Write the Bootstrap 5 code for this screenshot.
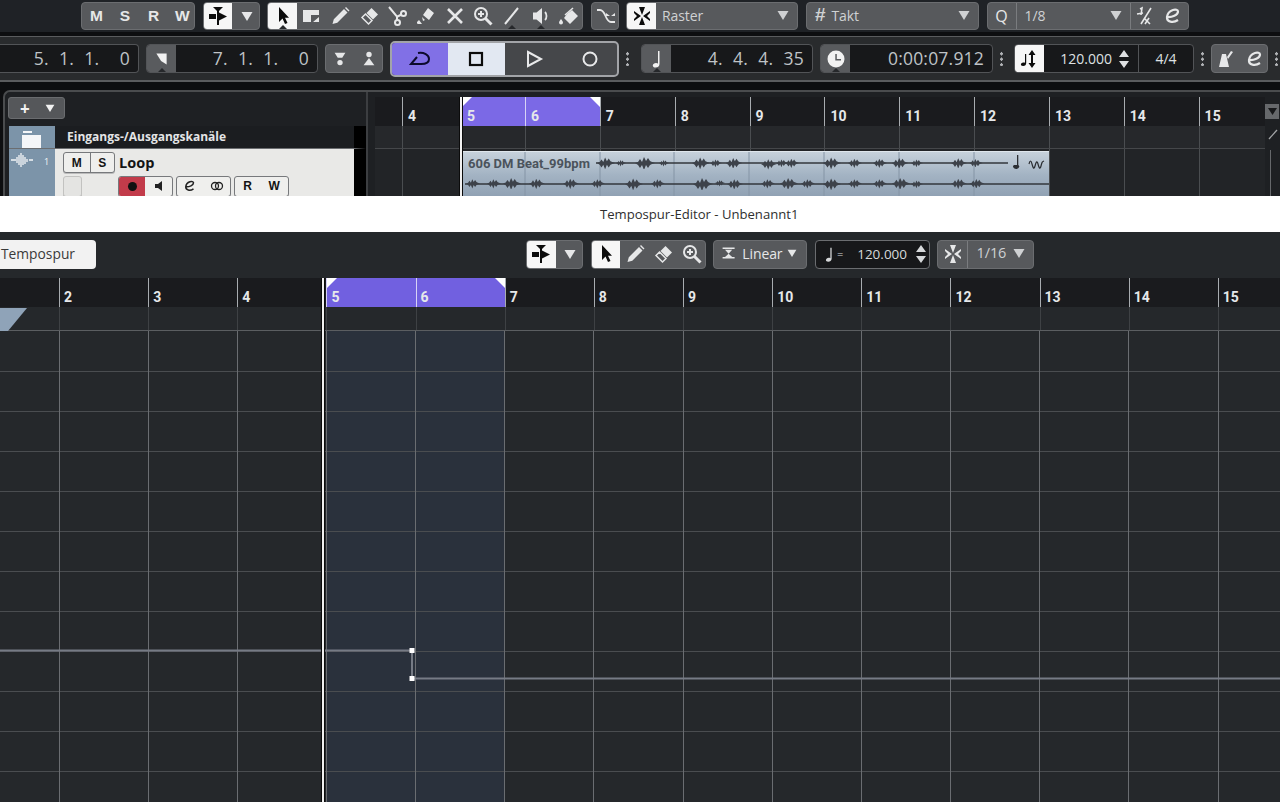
<!doctype html>
<html lang="de"><head><meta charset="utf-8"><title>Tempospur-Editor</title>
<link href="https://cdn.jsdelivr.net/npm/bootstrap@5.3.0/dist/css/bootstrap.min.css" rel="stylesheet">
<style>
html,body{height:802px;overflow:hidden}
body{background:#0d0e10;font-family:"Open Sans","Liberation Sans",sans-serif;color:#c9ccd0;font-size:13px}
.cb-i{width:20px;height:20px;fill:currentColor;stroke:none;display:block;flex:none}
.cb-tb{height:32px;background:#1f2226;padding-left:81px;gap:7.6px}
.cb-g{height:28px;background:#57595c;border:1px solid #6b6d70;border-radius:4px;margin-top:2px;overflow:hidden;color:#e6e7e8;flex:none}
.cb-c{width:28.7px;height:100%;flex:none}
.cb-on{background:#f6f6f6;color:#0c0c0c}
.cb-sep{border-left:1px solid #7a7c7f}
.cb-l{font-size:14px;color:#cfd1d3;letter-spacing:-.1px;padding-bottom:2px}
.cb-bold{font-weight:700;font-size:15.500px;font-family:"Liberation Sans",sans-serif}
.cb-gap{height:4px;background:#0d0e10}
.cb-tr{height:46px;background:#292b2d;border-top:1px solid #5a5c5e;border-bottom:2px solid #5a5c5e;gap:7px}
.cb-box{height:29px;background:#17181a;border:1px solid #525457;border-radius:4px;overflow:hidden;flex:none;font-size:17.5px;color:#bfc3c7}
.cb-ic{width:29px;height:100%;background:#595b5e;color:#f2f2f2;flex:none}
.cb-ic.cb-on{background:#f6f6f6;color:#0c0c0c}
.cb-ntc{position:relative}
.cb-ntc::after{content:"";position:absolute;left:50%;bottom:0;margin-left:-4px;border:4px solid transparent;border-top:0;border-bottom-color:#26282b}
.cb-val{flex:1;text-align:right;padding-right:8px;white-space:pre;letter-spacing:.2px;word-spacing:5.5px}
.cb-plain{word-spacing:0}
.cb-loop{height:36px;width:229px;border:2px solid #a2a4a8;border-radius:5px;overflow:hidden;background:#45474a;margin-left:0;flex:none}
.cb-dots{width:3px;height:15px;flex:none;background:radial-gradient(circle,#b0b2b5 1.4px,transparent 1.6px) 0 0/3px 5.5px}
.cb-panel{height:106px;margin:8px 0 0 3px;border-top:2px solid #4a4c4e;border-left:2px solid #4a4c4e;border-top-left-radius:7px;background:#1e2023;overflow:hidden}
.cb-left{width:363px;flex:none;border-right:2px solid #3c3e41}
.cb-add{width:57px;height:22px;margin:5px 0 7px 3px;padding-left:5px;background:#55575a;border:1px solid #6a6c6f;border-radius:3px;color:#f2f2f2}
.cb-trk{margin-left:4px;width:357px;border-right:12px solid #000}
.cb-tc{width:46px;background:#7c94a9;flex:none;color:#f4f6f8}
.cb-fold{height:23px;background:#1b1d20;border-bottom:1px solid #6b6d70;color:#e4e5e6;font-weight:700;font-size:12px}
.cb-loopt{height:50px;background:#e9e9e7;margin-top:0}
.cb-mini{height:21px;border:1px solid #77797c;border-radius:3px;background:#efefed;color:#141414;font:700 12px "Liberation Sans",sans-serif;overflow:hidden;box-shadow:0 1px 0 #bbb}
.cb-mc{height:100%;flex:none}
.cb-right{flex:1;min-width:0;padding-left:7px}
.cb-rul{height:29px;background:#1a1b1e;margin-top:5px;font:700 14px "Roboto","Liberation Sans",sans-serif;color:#e6e8ea}
.cb-lane{height:23px;background:#26282b;border-bottom:1px solid #45474a}
.cb-rest{height:47px;background:#222427;position:relative}
.cb-b{flex:none;border-left:1px solid #a8acb0;padding:11px 0 0 5px;height:100%;width:74.85px}
.cb-lane .cb-b,.cb-rest .cb-b{border-left-color:#4a4d50}
.cb-w0{width:27px;border:0}.cb-w1{width:59px}.cb-w2{width:64px}.cb-w3{width:66px}
.cb-pur{background:#7b69e6;position:relative;border-left-color:#d7d3f5}
.cb-c1,.cb-c2{position:absolute;top:0;width:0;height:0;border-top:10px solid #fff}
.cb-c1{left:0;border-right:10px solid transparent}.cb-c2{right:0;border-left:10px solid transparent}
.cb-ph{position:absolute;width:2px;background:#f1f1f1;box-shadow:-1px 0 0 #0b0b0b,1px 0 0 #0b0b0b}
.cb-evt{position:absolute;left:88px;top:2px;width:586px;height:47px;background:linear-gradient(#c6d1db,#a3b3c3 50%,#8fa0b2);border-top:1px solid #dfe6ec}
.cb-side{width:15px;flex:none;background:#1e2023;color:#a4a6a8;padding-top:12px}
.cb-sb{width:14px;height:15px;background:#66686b;color:#17181a}
.cb-vl{width:1px;height:46px;background:#66686b;margin:9px 0 0 5px}
.cb-title{height:36px;background:#fff;color:#2e2e2e;font-size:13.100px;padding-left:600px;line-height:36px}
.cb-ebar{height:46px;background:#25282b;gap:7.6px;padding-bottom:2px}
.cb-spur{width:96px;height:29px;background:#f2f2f2;border-radius:0 4px 4px 0;color:#3a3a3a;padding-left:1px;line-height:27px;font-size:13.800px;margin-right:422.5px;flex:none}
.cb-eg{height:29px;background:#57595c;border:1px solid #6b6d70;border-radius:4px;overflow:hidden;color:#e6e7e8;flex:none}
.cb-ed{position:relative;height:524px;background:#25282b}
.cb-erul{height:29px;background:#1a1b1e;font:700 14px "Roboto","Liberation Sans",sans-serif;color:#e6e8ea}
.cb-elane{height:24px;background:#25282b;border-bottom:1px solid #5b5e61}
.cb-e{flex:none;width:89.15px;height:100%;border-left:1px solid #a8acb0;padding:11px 0 0 4px}
.cb-elane .cb-e{border-left-color:#3e4144}
.cb-e0{width:59px;border:0;flex:none}
.cb-epur{background:#7160e0;position:relative;border-left-color:#d7d3f5}
.cb-plot{display:block;width:1280px;height:471px}
.cb-tri{position:absolute;left:0;top:30px;width:27px;height:23px}
.cb-s18{width:18px;height:18px}
</style></head>
<body class="m-0">
<svg width="0" height="0" class="position-absolute"><defs>
<symbol id="snapt" viewBox="0 0 20 20"><path d="M5 1h10l-4 4v14H9V5zM1 8h7v5H1zM11 6.500l8 4-8 4z"/></symbol>
<symbol id="arrow" viewBox="0 0 20 20"><path d="M6 1v15l3.500-3.500 2.500 5.500 2.500-1-2.500-5.200H16z"/></symbol>
<symbol id="range" viewBox="0 0 20 20"><path d="M2 4h16v5h-8v7H2zM18 11v5h-6z"/></symbol>
<symbol id="pencil" viewBox="0 0 20 20"><path d="M2.500 18l1.300-4.800L14 3l3.500 3.500L7.300 16.700zM15 2l1-1 3.500 3.500-1 1z"/></symbol>
<symbol id="eraser" viewBox="0 0 20 20"><path d="M12.500 2L19 8.500l-5 5L7.500 7z"/><path d="M6.500 8l6.500 6.500-3.500 3.500-6.500-6.500z" fill="none" stroke="currentColor" stroke-width="1.500"/></symbol>
<symbol id="sciss" viewBox="0 0 20 20"><g fill="none" stroke="currentColor" stroke-width="2"><path d="M2 1l8 9.500v4M10.500 10.500l4-2"/><circle cx="10.500" cy="16.500" r="2.500"/><circle cx="16.500" cy="7.500" r="2.500"/></g></symbol>
<symbol id="glue" viewBox="0 0 20 20"><path d="M12 2l6 5-5 7-6-5zM6 11l3 3-2 1zM3 14l3 4H2c-1 0-1-1-1-2z"/></symbol>
<symbol id="xx" viewBox="0 0 20 20"><path d="M3 3l14 14M17 3L3 17" stroke="currentColor" stroke-width="2.600" fill="none"/></symbol>
<symbol id="zoom" viewBox="0 0 20 20"><g fill="none" stroke="currentColor"><circle cx="8" cy="8" r="6" stroke-width="2"/><path d="M5 8h6M8 5v6" stroke-width="2"/><path d="M12.500 12.500l6 6" stroke-width="3"/></g></symbol>
<symbol id="line" viewBox="0 0 20 20"><path d="M3 18L16 2" stroke="currentColor" stroke-width="2" fill="none"/></symbol>
<symbol id="spk" viewBox="0 0 20 20"><path d="M2 6.500h3.500L11 2v16l-5.500-4.500H2z"/><path d="M14 6c2 2 2 6 0 8" stroke="currentColor" stroke-width="1.800" fill="none"/></symbol>
<symbol id="paint" viewBox="0 0 20 20"><path d="M8 8l5-4 6 6-8 8-6-6zM2 13c1 1.500 2 2.500 2 3.500a2 2 0 0 1-4 0c0-1 1-2 2-3.500z"/><path d="M6 9l8-7" stroke="currentColor" stroke-width="1.500"/></symbol>
<symbol id="warp" viewBox="0 0 20 20"><path d="M1 4h3c6 0 5 12 11 12h4" fill="none" stroke="currentColor" stroke-width="1.800"/><path d="M10 7l4 3-4 0zM19 7l-4 3 4 0z"/></symbol>
<symbol id="cross" viewBox="0 0 20 20"><path d="M10 9L7 1h6zM10 11l3 8H7zM9 10L2 5v2l3 3-3 3v2zM11 10l7-5v2l-3 3 3 3v2z"/></symbol>
<symbol id="dn" viewBox="0 0 20 20"><path d="M4.500 6h11L10 15z"/></symbol>
<symbol id="qq" viewBox="0 0 20 20"><path d="M2 8l6-1M5 3l2-1-1 7M16 2L6 18M10 18l4-6M10 13l5 5" stroke="currentColor" stroke-width="1.600" fill="none"/></symbol>
<symbol id="ee" viewBox="0 0 20 20"><path d="M4 11c5 .5 11-2 11-5.500C15 2 5 3 4 11c-.5 5 6 6.500 11 3" stroke="currentColor" stroke-width="2.200" fill="none"/></symbol>
<symbol id="fl1" viewBox="0 0 20 20"><path d="M4 3h12l-3.500 5.500h-5zM10 11a3 3 0 1 1 0 6 3 3 0 0 1 0-6z"/></symbol>
<symbol id="fl2" viewBox="0 0 20 20"><circle cx="10" cy="5" r="3"/><path d="M10 9l6 8H4z"/></symbol>
<symbol id="fl3" viewBox="0 0 20 20"><path d="M4 4h12v13L9.500 13z"/></symbol>
<symbol id="loop" viewBox="0 0 24 20"><path d="M10 4c6-1 11 2 11 6 0 4-4 5-8 5H3l6-7" fill="none" stroke="currentColor" stroke-width="2"/></symbol>
<symbol id="stop" viewBox="0 0 20 20"><rect x="4" y="4" width="12" height="12" fill="none" stroke="currentColor" stroke-width="2.200"/></symbol>
<symbol id="play" viewBox="0 0 20 20"><path d="M4 3l13 7-13 7z" fill="none" stroke="currentColor" stroke-width="2"/></symbol>
<symbol id="rec" viewBox="0 0 20 20"><circle cx="10" cy="10" r="6.500" fill="none" stroke="currentColor" stroke-width="2"/></symbol>
<symbol id="note" viewBox="0 0 20 20"><path d="M11 2h1.500v13c0 2.500-2 3.500-4 3.500-2.500 0-3.500-2-2-3.500 1.300-1.300 3.400-1.300 4.500-.5z"/></symbol>
<symbol id="clock" viewBox="0 0 20 20"><path fill-rule="evenodd" d="M10 1.500a8.500 8.500 0 1 1 0 17 8.500 8.500 0 0 1 0-17zM9.300 5v6.500H15V10h-4.200V5z"/></symbol>
<symbol id="tmp" viewBox="0 0 20 20"><path d="M5 5h1.200v9c0 2-1.200 3-3 3-2 0-3-1.500-1.800-2.800 1-1 2.500-1 3.600-.4zM12 1l3.500 5H13v8h2.500L12 19l-3.500-5H11V6H8.500z"/></symbol>
<symbol id="updn" viewBox="0 0 12 20"><path d="M6 1l5 7H1zM6 19l-5-7h10z"/></symbol>
<symbol id="metro" viewBox="0 0 20 20"><path d="M6 5h4l3 13H3zM15 2l2 1-5 7-1-2z"/></symbol>
<symbol id="lin" viewBox="0 0 20 20"><path d="M2 3h15v2H2zM5 6h9l-4.500 5zM9.500 11L5 15h9zM2 15h15v2H2z"/></symbol>
<symbol id="blob" viewBox="0 0 20 12"><path d="M0 6l3-1 2-3 2 3 2-5 2 4 2-3 2 3 2 1 3 1-3 1-2 1-2 3-2-3-2 5-2-5-2 3-2-3z"/></symbol>
</defs></svg>

<div class="cb-tb d-flex">
  <div class="cb-g d-flex align-items-center" style="width:114px"><div class="cb-c d-flex align-items-center justify-content-center cb-bold">M</div><div class="cb-c d-flex align-items-center justify-content-center cb-bold">S</div><div class="cb-c d-flex align-items-center justify-content-center cb-bold">R</div><div class="cb-c d-flex align-items-center justify-content-center cb-bold">W</div></div>
  <div class="cb-g d-flex" style="width:57px"><div class="cb-c cb-on d-flex align-items-center justify-content-center"><svg class="cb-i"><use href="#snapt"/></svg></div><div class="cb-c d-flex align-items-center justify-content-center"><svg class="cb-i"><use href="#dn"/></svg></div></div>
  <div class="cb-g d-flex position-relative" style="width:316px">
    <div class="cb-c cb-on cb-ntc d-flex align-items-center justify-content-center"><svg class="cb-i"><use href="#arrow"/></svg></div>
    <div class="cb-c d-flex align-items-center justify-content-center"><svg class="cb-i"><use href="#range"/></svg></div>
    <div class="cb-c d-flex align-items-center justify-content-center"><svg class="cb-i"><use href="#pencil"/></svg></div>
    <div class="cb-c d-flex align-items-center justify-content-center"><svg class="cb-i"><use href="#eraser"/></svg></div>
    <div class="cb-c d-flex align-items-center justify-content-center"><svg class="cb-i"><use href="#sciss"/></svg></div>
    <div class="cb-c d-flex align-items-center justify-content-center"><svg class="cb-i"><use href="#glue"/></svg></div>
    <div class="cb-c d-flex align-items-center justify-content-center"><svg class="cb-i"><use href="#xx"/></svg></div>
    <div class="cb-c d-flex align-items-center justify-content-center"><svg class="cb-i"><use href="#zoom"/></svg></div>
    <div class="cb-c cb-ntc d-flex align-items-center justify-content-center"><svg class="cb-i"><use href="#line"/></svg></div>
    <div class="cb-c cb-ntc d-flex align-items-center justify-content-center"><svg class="cb-i"><use href="#spk"/></svg></div>
    <div class="cb-c d-flex align-items-center justify-content-center"><svg class="cb-i"><use href="#paint"/></svg></div>
  </div>
  <div class="cb-g d-flex" style="width:28px"><div class="cb-c d-flex align-items-center justify-content-center"><svg class="cb-i"><use href="#warp"/></svg></div></div>
  <div class="cb-g d-flex" style="width:172px"><div class="cb-c cb-on d-flex align-items-center justify-content-center"><svg class="cb-i"><use href="#cross"/></svg></div><div class="flex-grow-1 d-flex align-items-center justify-content-between cb-l pe-1" style="padding-left:6px">Raster<svg class="cb-i"><use href="#dn"/></svg></div></div>
  <div class="cb-g d-flex" style="width:173px"><div class="flex-grow-1 d-flex align-items-center cb-l ps-2 pe-1"><span class="cb-bold" style="font-size:19px;margin-right:6px">#</span>Takt<svg class="cb-i ms-auto"><use href="#dn"/></svg></div></div>
  <div class="cb-g d-flex" style="width:202px"><div class="d-flex align-items-center justify-content-center" style="width:28px;font-size:16px">Q</div><div class="cb-sep d-flex align-items-center justify-content-between cb-l ps-2 pe-1" style="width:114px">1/8<svg class="cb-i"><use href="#dn"/></svg></div><div class="cb-sep d-flex align-items-center justify-content-around flex-grow-1"><svg class="cb-i"><use href="#qq"/></svg><svg class="cb-i"><use href="#ee"/></svg></div></div>
</div>
<div class="cb-gap"></div>
<div class="cb-tr d-flex align-items-center">
  <div class="cb-box d-flex align-items-center" style="width:139px;border-left:0;border-radius:0 4px 4px 0"><div class="cb-val">5. 1. 1.  0</div></div>
  <div class="cb-box d-flex align-items-center" style="width:172px"><div class="cb-ic cb-ntc d-flex align-items-center justify-content-center"><svg class="cb-i" style="width:17px;height:17px"><use href="#fl3"/></svg></div><div class="cb-val">7. 1. 1.  0</div></div>
  <div class="cb-g d-flex m-0" style="width:58px;height:29px"><div class="cb-c d-flex align-items-center justify-content-center"><svg class="cb-i cb-s18"><use href="#fl1"/></svg></div><div class="cb-c d-flex align-items-center justify-content-center"><svg class="cb-i cb-s18"><use href="#fl2"/></svg></div></div>
  <div class="cb-loop d-flex">
    <div class="d-flex align-items-center justify-content-center" style="width:56px;background:#8170e6;color:#0c0a2c"><svg class="cb-i" style="width:24px"><use href="#loop"/></svg></div>
    <div class="d-flex align-items-center justify-content-center" style="width:58px;background:#e2e8f2;color:#0c0c0c"><svg class="cb-i"><use href="#stop"/></svg></div>
    <div class="d-flex align-items-center justify-content-center" style="width:58px;color:#e8e9ea"><svg class="cb-i"><use href="#play"/></svg></div>
    <div class="d-flex align-items-center justify-content-center" style="width:55px;color:#e8e9ea"><svg class="cb-i"><use href="#rec"/></svg></div>
  </div>
  <div class="cb-dots"></div>
  <div class="cb-box d-flex align-items-center" style="width:172px;margin-left:5px"><div class="cb-ic cb-ntc d-flex align-items-center justify-content-center"><svg class="cb-i"><use href="#note"/></svg></div><div class="cb-val">4. 4. 4. 35</div></div>
  <div class="cb-box d-flex align-items-center" style="width:173px"><div class="cb-ic cb-ntc d-flex align-items-center justify-content-center"><svg class="cb-i"><use href="#clock"/></svg></div><div class="cb-val cb-plain">0:00:07.912</div></div>
  <div class="cb-dots"></div>
  <div class="cb-box d-flex align-items-center" style="width:180px;margin-left:4px;font-size:14px;color:#dfe1e3"><div class="cb-ic cb-on d-flex align-items-center justify-content-center"><svg class="cb-i"><use href="#tmp"/></svg></div><div class="d-flex align-items-center justify-content-end pe-2" style="width:94px;gap:6px">120.000<svg width="12" height="20" fill="currentColor"><use href="#updn"/></svg></div><div class="cb-sep d-flex align-items-center justify-content-center h-100 flex-grow-1" style="border-color:#525457">4/4</div></div>
  <div class="cb-dots"></div>
  <div class="cb-g d-flex m-0" style="width:57px;height:29px"><div class="cb-c d-flex align-items-center justify-content-center"><svg class="cb-i"><use href="#metro"/></svg></div><div class="cb-c d-flex align-items-center justify-content-center"><svg class="cb-i"><use href="#ee"/></svg></div></div>
  <div class="cb-dots"></div>
</div>

<div class="cb-panel d-flex">
  <div class="cb-left">
    <div class="cb-add d-flex align-items-center justify-content-around"><b style="font-size:17px;line-height:1">+</b><svg class="cb-i" style="width:16px;height:16px"><use href="#dn"/></svg></div>
    <div class="cb-trk cb-fold d-flex"><div class="cb-tc d-flex justify-content-center pt-1"><svg width="22" height="18" fill="#f5f6f8"><path d="M2 1h9v2H2zM1 5h19v13H1z"/></svg></div><div class="d-flex align-items-center" style="padding-left:12px">Eingangs-/Ausgangskanäle</div></div>
    <div class="cb-trk cb-loopt d-flex">
      <div class="cb-tc d-flex align-items-start" style="padding:3px 0 0 2px"><svg width="22" height="18" stroke="#f4f6f8" stroke-width="1.300" fill="none"><path d="M0 8h5M6 5v6M8 3v10M10 1v14M12 3v10M14 5v7M16 7v3M18 8h4"/></svg><small style="font-size:9px;margin:3px 0 0 11px">1</small></div>
      <div class="flex-grow-1 ps-2 d-flex flex-column" style="padding-top:3px">
        <div class="d-flex align-items-center" style="gap:4px"><div class="cb-mini d-flex" style="width:52px"><div class="cb-mc d-flex align-items-center justify-content-center flex-fill">M</div><div class="cb-mc cb-sep d-flex align-items-center justify-content-center flex-fill" style="border-color:#77797c">S</div></div><b style="font-size:14.500px;color:#141414">Loop</b></div>
        <div class="d-flex" style="gap:3px;margin-top:2px">
          <div class="cb-mini" style="width:19px;margin-right:33px;background:#e4e4e2;border-color:#c2c2c0"></div>
          <div class="cb-mini d-flex" style="width:55px"><div class="cb-mc d-flex align-items-center justify-content-center" style="width:26px;background:#c23b4a"><svg width="11" height="11"><circle cx="5.500" cy="5.500" r="4.500" fill="#111"/></svg></div><div class="cb-mc d-flex align-items-center justify-content-center flex-fill"><svg width="12" height="12" fill="#222"><path d="M2 4h3l4-3v10L5 8H2z"/></svg></div></div>
          <div class="cb-mini d-flex justify-content-around align-items-center" style="width:55px"><svg width="14" height="14" color="#222"><use href="#ee"/></svg><svg width="14" height="10" fill="none" stroke="#222" stroke-width="1.300"><circle cx="5" cy="5" r="3.500"/><circle cx="9" cy="5" r="3.500"/></svg></div>
          <div class="cb-mini d-flex justify-content-around align-items-center" style="width:55px"><span>R</span><span>W</span></div>
        </div>
      </div>
    </div>
  </div>
  <div class="cb-right flex-column d-flex">
    <div class="d-flex flex-grow-1">
      <div class="flex-grow-1 position-relative" style="min-width:0">
        <div class="cb-rul d-flex"><div class="cb-b cb-w0"></div><div class="cb-b cb-w1">4</div><div class="cb-b cb-w2 cb-pur"><span class="cb-c1"></span>5</div><div class="cb-b cb-pur"><span class="cb-c2"></span>6</div><div class="cb-b">7</div><div class="cb-b">8</div><div class="cb-b">9</div><div class="cb-b">10</div><div class="cb-b">11</div><div class="cb-b">12</div><div class="cb-b">13</div><div class="cb-b">14</div><div class="cb-b cb-w3">15</div></div>
        <div class="cb-lane d-flex"><div class="cb-b cb-w0"></div><div class="cb-b cb-w1"></div><div class="cb-b cb-w2"></div><div class="cb-b"></div><div class="cb-b"></div><div class="cb-b"></div><div class="cb-b"></div><div class="cb-b"></div><div class="cb-b"></div><div class="cb-b"></div><div class="cb-b"></div><div class="cb-b"></div><div class="cb-b cb-w3"></div></div>
        <div class="cb-rest d-flex"><div class="cb-b cb-w0"></div><div class="cb-b cb-w1"></div><div class="cb-b cb-w2"></div><div class="cb-b"></div><div class="cb-b"></div><div class="cb-b"></div><div class="cb-b"></div><div class="cb-b"></div><div class="cb-b"></div><div class="cb-b"></div><div class="cb-b"></div><div class="cb-b"></div><div class="cb-b cb-w3"></div>
          <svg class="cb-evt" viewBox="0 0 586 46">
            <g stroke="#8494a5" stroke-width="1"><path d="M62 0v46M137 0v46M211 0v46M286 0v46M361 0v46M436 0v46M511 0v46"/></g>
            <text x="5" y="15.500" font-family="Roboto,Liberation Sans,sans-serif" font-weight="700" font-size="13" fill="#4b535c">606 DM Beat_99bpm</text>
            <path d="M133 11h412M2 32h584" stroke="#33373d" stroke-width="1.300"/>
            <g fill="#3d424a">
              <use href="#blob" x="134" y="5" width="18" height="12"/><use href="#blob" x="153" y="6" width="10" height="10"/><use href="#blob" x="172" y="5" width="20" height="12"/><use href="#blob" x="196" y="6" width="10" height="10"/><use href="#blob" x="229" y="5" width="18" height="12"/><use href="#blob" x="247" y="6" width="12" height="10"/><use href="#blob" x="262" y="6" width="18" height="10"/><use href="#blob" x="298" y="6" width="16" height="12"/><use href="#blob" x="313" y="7" width="12" height="8"/><use href="#blob" x="322" y="6" width="14" height="10"/><use href="#blob" x="360" y="5" width="18" height="12"/><use href="#blob" x="385" y="6" width="14" height="10"/><use href="#blob" x="410" y="6" width="14" height="10"/><use href="#blob" x="428" y="6" width="18" height="10"/><use href="#blob" x="448" y="5" width="12" height="12"/><use href="#blob" x="488" y="6" width="16" height="10"/><use href="#blob" x="506" y="7" width="14" height="8"/>
              <use href="#blob" x="3" y="26" width="14" height="11"/><use href="#blob" x="24" y="26" width="14" height="11"/><use href="#blob" x="40" y="26" width="18" height="11"/><use href="#blob" x="66" y="26" width="16" height="11"/><use href="#blob" x="100" y="26" width="16" height="11"/><use href="#blob" x="128" y="26" width="14" height="11"/><use href="#blob" x="162" y="26" width="18" height="12"/><use href="#blob" x="188" y="26" width="14" height="11"/><use href="#blob" x="230" y="26" width="20" height="12"/><use href="#blob" x="252" y="26" width="10" height="10"/><use href="#blob" x="264" y="27" width="16" height="10"/><use href="#blob" x="298" y="26" width="14" height="11"/><use href="#blob" x="316" y="26" width="20" height="11"/><use href="#blob" x="338" y="26" width="14" height="11"/><use href="#blob" x="360" y="26" width="18" height="12"/><use href="#blob" x="385" y="26" width="14" height="11"/><use href="#blob" x="410" y="26" width="14" height="11"/><use href="#blob" x="428" y="26" width="20" height="11"/><use href="#blob" x="448" y="26" width="12" height="12"/><use href="#blob" x="488" y="26" width="16" height="11"/><use href="#blob" x="506" y="27" width="16" height="9"/>
            </g>
            <path d="M554 3h1.300v10h-1.300zM551 13a3 2.300 0 1 0 4.300 0z" fill="#2b2e33"/><path d="M566 12c1-4 2-4 3 0s2 6 3 2 2-6 3-2 2 6 3 2 1-4 3-5" fill="none" stroke="#2b2e33" stroke-width="1.200"/>
          </svg>
        </div>
        <div class="cb-ph" style="left:85px;top:5px;height:105px"></div>
      </div>
      <div class="cb-side"><div class="cb-sb d-flex align-items-center justify-content-center"><svg width="11" height="11" fill="currentColor"><path d="M1 2h9l-4.500 7z"/></svg></div><svg class="d-block mt-2" width="14" height="14" stroke="currentColor" fill="none" stroke-width="1.300"><path d="M4 12l8-9"/></svg><div class="cb-vl"></div></div>
    </div>
  </div>
</div>

<div class="cb-title">Tempospur-Editor - Unbenannt1</div>
<div class="cb-ebar d-flex align-items-center">
  <div class="cb-spur">Tempospur</div>
  <div class="cb-eg d-flex" style="width:57px"><div class="cb-c cb-on d-flex align-items-center justify-content-center"><svg class="cb-i"><use href="#snapt"/></svg></div><div class="cb-c d-flex align-items-center justify-content-center"><svg class="cb-i"><use href="#dn"/></svg></div></div>
  <div class="cb-eg d-flex" style="width:115px"><div class="cb-c cb-on d-flex align-items-center justify-content-center"><svg class="cb-i"><use href="#arrow"/></svg></div><div class="cb-c d-flex align-items-center justify-content-center"><svg class="cb-i"><use href="#pencil"/></svg></div><div class="cb-c d-flex align-items-center justify-content-center"><svg class="cb-i"><use href="#eraser"/></svg></div><div class="cb-c d-flex align-items-center justify-content-center"><svg class="cb-i"><use href="#zoom"/></svg></div></div>
  <div class="cb-eg d-flex align-items-center cb-l" style="width:94px;padding-left:7px;gap:5px"><svg class="cb-i" style="width:16px;height:16px"><use href="#lin"/></svg>Linear<svg class="cb-i" style="width:16px;height:16px;margin-left:-3px"><use href="#dn"/></svg></div>
  <div class="cb-eg d-flex align-items-center" style="width:115px;background:#17181a;padding-left:5px;color:#d6d8da"><svg class="cb-i" style="width:17px;height:17px"><use href="#note"/></svg><span style="font-size:11px;margin-left:-1px">=</span><span style="margin-left:14px;font-size:13.500px">120.000</span><svg width="12" height="20" fill="currentColor" class="ms-2"><use href="#updn"/></svg></div>
  <div class="cb-eg d-flex" style="width:97px"><div class="d-flex align-items-center justify-content-center" style="width:29px"><svg class="cb-i"><use href="#cross"/></svg></div><div class="cb-sep d-flex align-items-center justify-content-between flex-grow-1 cb-l ps-2 pe-1" style="font-size:14.500px">1/16<svg class="cb-i"><use href="#dn"/></svg></div></div>
</div>
<div class="cb-ed">
  <div class="cb-erul d-flex"><div class="cb-e0"></div><div class="cb-e">2</div><div class="cb-e">3</div><div class="cb-e">4</div><div class="cb-e cb-epur"><span class="cb-c1"></span>5</div><div class="cb-e cb-epur"><span class="cb-c2"></span>6</div><div class="cb-e">7</div><div class="cb-e">8</div><div class="cb-e">9</div><div class="cb-e">10</div><div class="cb-e">11</div><div class="cb-e">12</div><div class="cb-e">13</div><div class="cb-e">14</div><div class="cb-e">15</div></div>
  <div class="cb-elane d-flex"><div class="cb-e0"></div><div class="cb-e"></div><div class="cb-e"></div><div class="cb-e"></div><div class="cb-e"></div><div class="cb-e"></div><div class="cb-e"></div><div class="cb-e"></div><div class="cb-e"></div><div class="cb-e"></div><div class="cb-e"></div><div class="cb-e"></div><div class="cb-e"></div><div class="cb-e"></div><div class="cb-e"></div></div>
  <svg class="cb-tri" viewBox="0 0 27 23"><path d="M0 0h27L8 23H0z" fill="#8fa3b8"/></svg>
  <svg class="cb-plot" viewBox="0 0 1280 471">
    <rect x="326" width="179" height="471" fill="#2a313c"/>
    <g stroke="#4a4d50"><path d="M0 40.500h1280M0 80.500h1280M0 120.500h1280M0 160.500h1280M0 200.500h1280M0 240.500h1280M0 280.500h1280M0 320.500h1280M0 360.500h1280M0 400.500h1280M0 440.500h1280"/></g>
    <g stroke="#6a6d71"><path d="M59.500 0v471M148.500 0v471M237.500 0v471M326.500 0v471M415.500 0v471M504.500 0v471M593.500 0v471M683.500 0v471M772.500 0v471M861.500 0v471M950.500 0v471M1039.500 0v471M1128.500 0v471M1218.500 0v471"/></g>
    <path d="M0 319.500h412v28h868" fill="none" stroke="#767b85" stroke-width="2"/>
    <rect x="409.500" y="317" width="5" height="5" fill="#fff"/><rect x="409.500" y="345" width="5" height="5" fill="#fff"/>
  </svg>
  <div class="cb-ph" style="left:322px;top:0;height:524px"></div>
</div>
</body></html>
